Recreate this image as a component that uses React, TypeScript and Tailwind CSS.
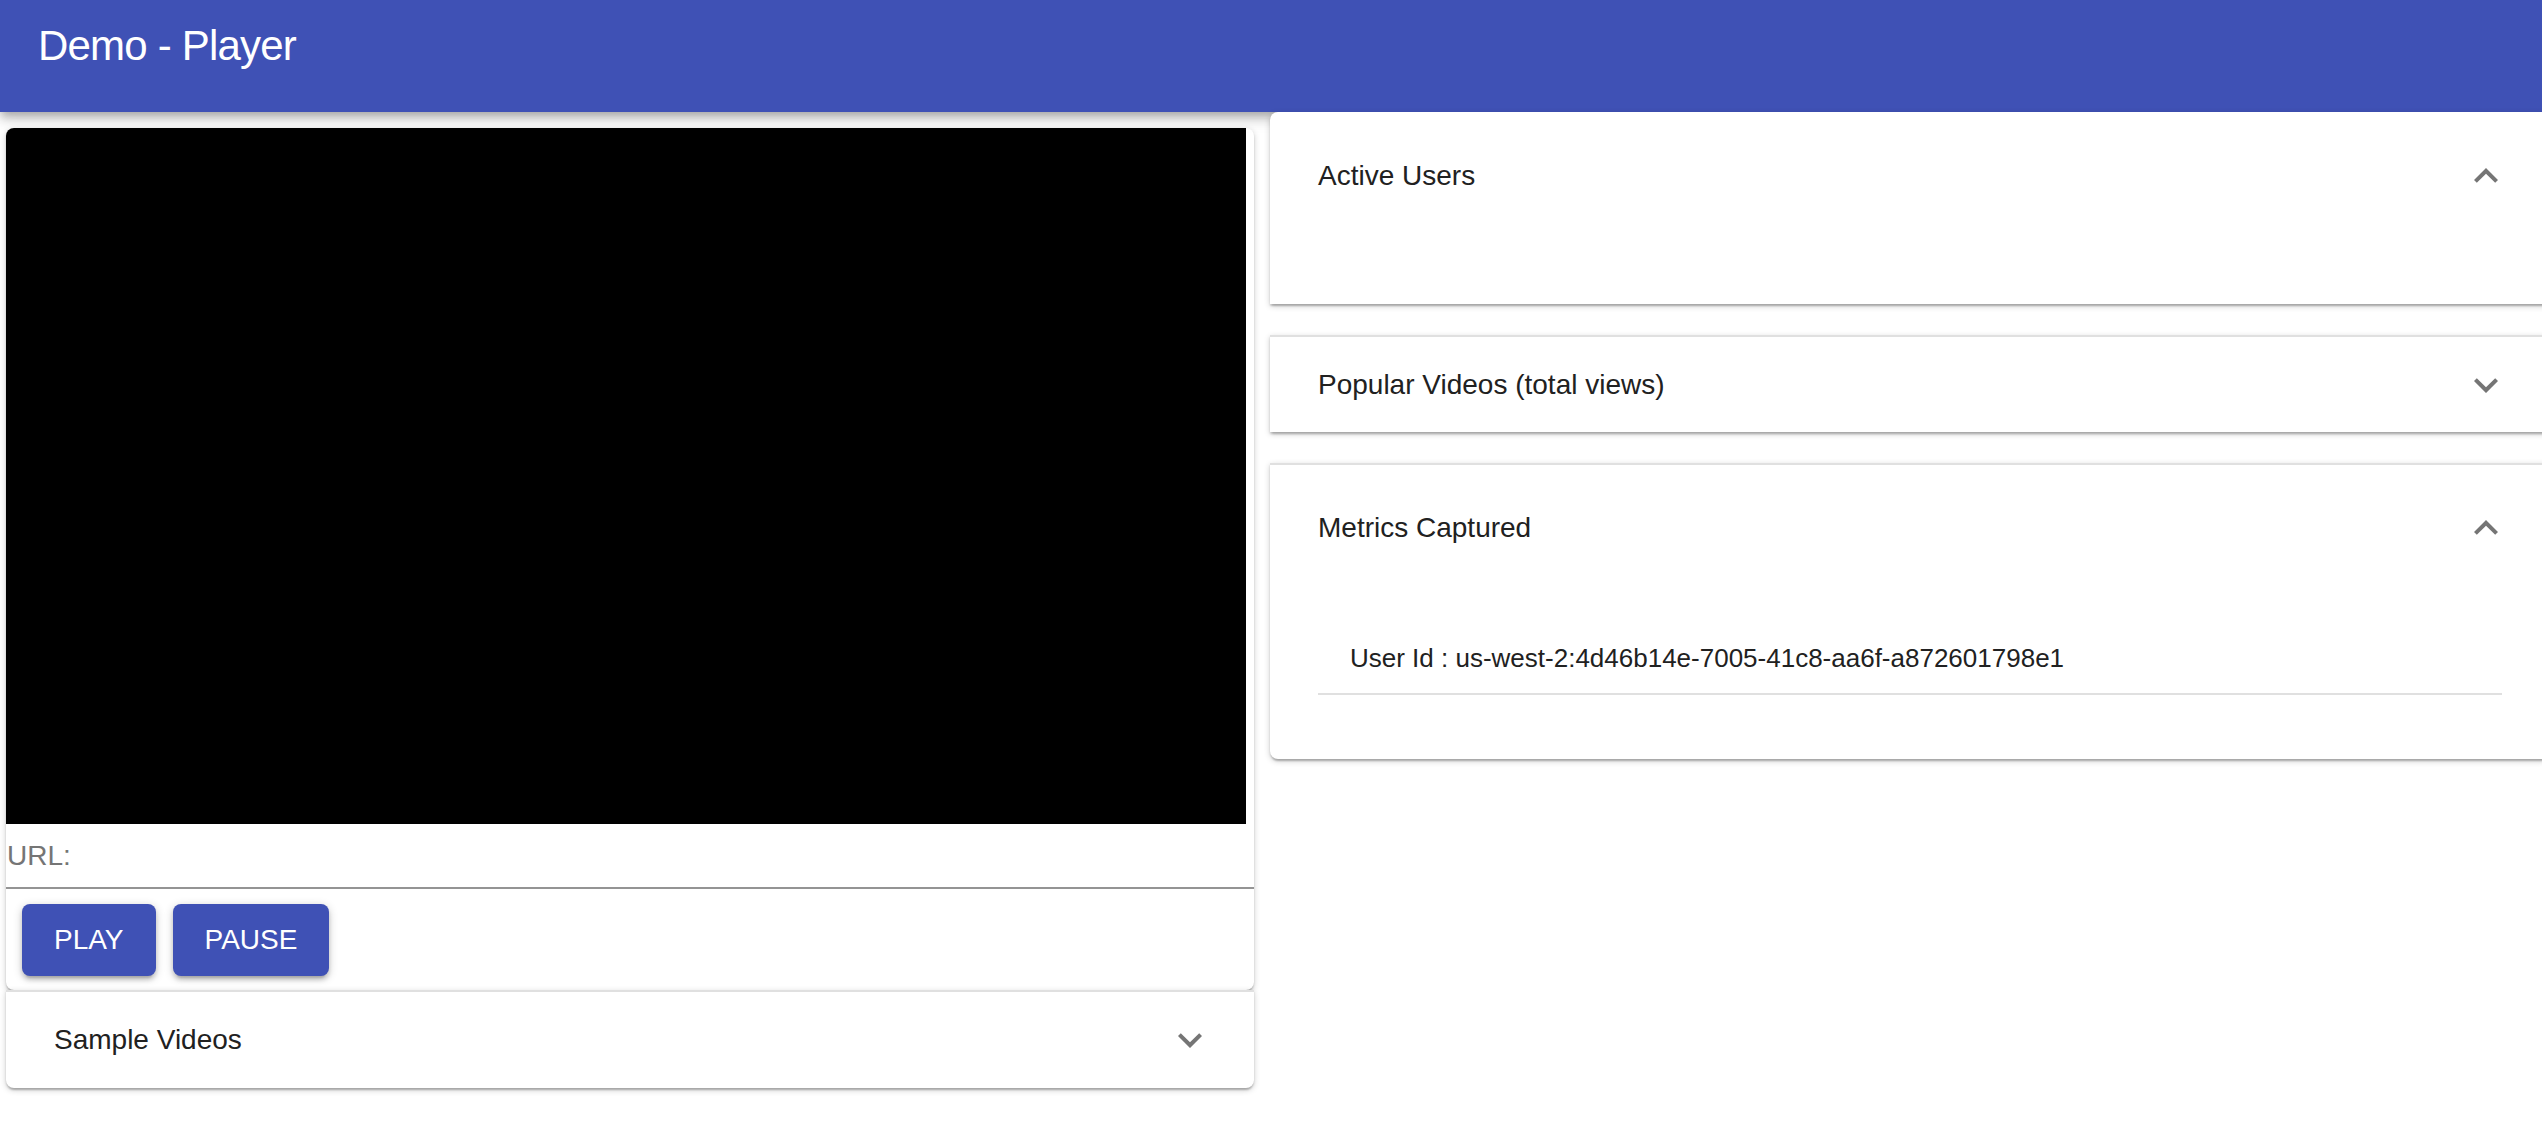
import React from "react";

const ExpandMore = () => (
  <svg viewBox="0 0 24 24" className="w-[48px] h-[48px] fill-[#757575]">
    <path d="M16.59 8.59L12 13.17 7.41 8.59 6 10l6 6 6-6z" />
  </svg>
);

const ExpandLess = () => (
  <svg viewBox="0 0 24 24" className="w-[48px] h-[48px] fill-[#757575]">
    <path d="M12 8l-6 6 1.41 1.41L12 10.83l4.59 4.58L18 14z" />
  </svg>
);

const paperShadow =
  "shadow-[0_2px_6px_0_rgba(0,0,0,0.2),0_2px_2px_0_rgba(0,0,0,0.14),0_4px_2px_-2px_rgba(0,0,0,0.12)]";

const Summary = ({
  title,
  open,
  height,
}: {
  title: string;
  open: boolean;
  height: string;
}) => (
  <div className={`flex items-center justify-between pl-[48px] pr-[16px] ${height}`}>
    <span className="text-[28px] text-[#212121]">{title}</span>
    <div className="flex w-[96px] h-[96px] items-center justify-center">
      {open ? <ExpandLess /> : <ExpandMore />}
    </div>
  </div>
);

const App = () => {
  return (
    <div className="w-[2542px] h-[1122px] overflow-hidden bg-white font-['Liberation_Sans',Arial,sans-serif]">
      <header className="relative z-10 h-[112px] bg-[#3f51b5] pl-[38px] pt-[25px] shadow-[0_4px_8px_-2px_rgba(0,0,0,0.2),0_8px_10px_0_rgba(0,0,0,0.14),0_2px_20px_0_rgba(0,0,0,0.12)]">
        <h1 className="text-[42px] leading-none text-white tracking-[-0.8px]">Demo - Player</h1>
      </header>

      <div className="flex items-start gap-[16px]">
        {/* player column */}
        <div className="ml-[6px] mt-[16px] flex w-[1248px] shrink-0 flex-col">
          <div className={`overflow-hidden rounded-[8px] bg-white ${paperShadow}`}>
            <div className="h-[696px] w-[1240px] bg-black" />
            <div className="flex h-[65px] items-center border-b-2 border-[#949494] pl-[1px]">
              <span className="text-[28px] text-[#757575]">URL:</span>
            </div>
            <div className="flex gap-[17px] pl-[16px] pt-[15px] pb-[14px]">
              {["PLAY", "PAUSE"].map((label) => (
                <button
                  key={label}
                  className="flex h-[72px] items-center rounded-[8px] bg-[#3f51b5] px-[32px] text-[28px] text-white shadow-[0_2px_10px_0_rgba(0,0,0,0.2),0_4px_4px_0_rgba(0,0,0,0.14),0_6px_2px_-4px_rgba(0,0,0,0.12)]"
                >
                  {label}
                </button>
              ))}
            </div>
          </div>
          <div className={`rounded-b-[8px] border-t-2 border-[#e0e0e0] bg-white ${paperShadow}`}>
            <Summary title="Sample Videos" open={false} height="h-[96px]" />
          </div>
        </div>

        {/* stats column */}
        <div className="relative z-20 flex w-[1280px] shrink-0 flex-col">
          <div className={`rounded-t-[8px] bg-white ${paperShadow}`}>
            <Summary title="Active Users" open height="h-[128px]" />
            <div className="h-[64px]" />
          </div>

          <div className={`mt-[31px] border-t-2 border-[#e0e0e0] bg-white ${paperShadow}`}>
            <Summary title="Popular Videos (total views)" open={false} height="h-[95px]" />
          </div>

          <div className={`mt-[31px] rounded-b-[8px] border-t-2 border-[#e0e0e0] bg-white ${paperShadow}`}>
            <Summary title="Metrics Captured" open height="h-[126px]" />
            <div className="px-[48px] pt-[16px] pb-[48px]">
              <ul className="py-[16px]">
                <li className="flex h-[72px] items-center border-b-2 border-[#e0e0e0] pl-[32px] text-[26px] text-[#212121]">
                  User Id : us-west-2:4d46b14e-7005-41c8-aa6f-a872601798e1
                </li>
              </ul>
            </div>
          </div>
        </div>
      </div>
    </div>
  );
};

export default App;
